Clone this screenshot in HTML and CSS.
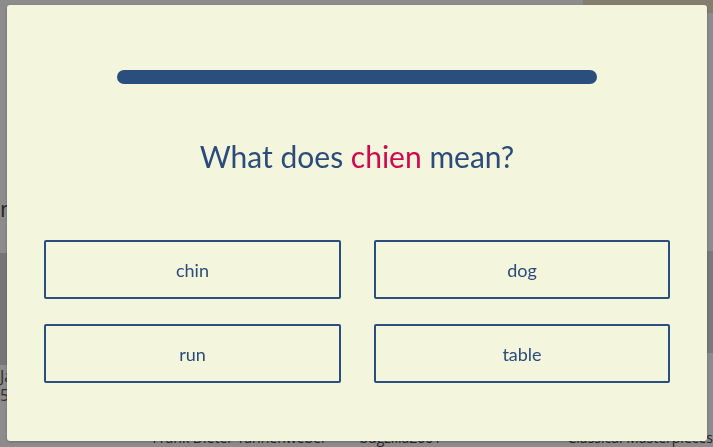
FILE: index.html
```html
<!DOCTYPE html>
<html>
<head>
<meta charset="utf-8">
<link rel="stylesheet" href="styles.css">
</head>
<body>
<div class="page">
  <div class="top-band"><div class="top-img"></div></div>
  <div class="mid">
    <div class="col col-a"><div class="label">n</div><div class="thumb"></div><div class="cap">Ja<br>54</div></div>
    <div class="col col-b"><div class="cap2">Frank Dieter Tannenweber</div></div>
    <div class="col col-c"><div class="cap2">bugzilla2001</div></div>
    <div class="col col-d"><div class="thumb2"></div><div class="cap2">Classical Masterpieces</div></div>
  </div>
</div>
<div class="overlay">
  <div class="modal">
    <div class="progress"></div>
    <h1 class="question">What does <span class="word">chien</span> mean?</h1>
    <div class="choices">
      <button class="choice">chin</button>
      <button class="choice">dog</button>
      <button class="choice">run</button>
      <button class="choice">table</button>
    </div>
  </div>
</div>
</body>
</html>
```
FILE: styles.css
```css
* { box-sizing: border-box; }
html, body { margin: 0; padding: 0; }
body {
  width: 713px;
  height: 447px;
  overflow: hidden;
  background: #fff;
  font-family: Lato, "Open Sans", sans-serif;
}
.page {
  height: 447px;
  display: flex;
  flex-direction: column;
}
.top-band {
  height: 25px;
  display: flex;
  justify-content: flex-end;
}
.top-img {
  width: 130px;
  background: #f0e6c8;
}
.mid {
  flex: 1;
  display: flex;
}
.col { display: flex; flex-direction: column; }
.col-a { width: 157px; }
.col-b { width: 213px; padding-top: 416px; }
.col-c { width: 214px; padding-top: 416px; }
.col-d { flex: 1; padding-top: 238px; }
.label { margin-top: 180px; height: 60px; color: #444; font-size: 22px; line-height: 30px; font-family: "Open Sans", sans-serif; }
.thumb { height: 112px; background: #d8d8d8; }
.cap { color: #555; font-size: 16px; line-height: 19px; margin-top: 2px; font-family: "Open Sans", sans-serif; }
.thumb2 { height: 102px; background: #dcdcdc; margin-bottom: 76px; }
.cap2 { color: #444; font-size: 14px; line-height: 18px; white-space: nowrap; font-family: "Open Sans", sans-serif; }

.overlay {
  position: fixed;
  inset: 0;
  background: rgba(0, 0, 0, 0.45);
  padding: 5px 6px 6px 7px;
}
.modal {
  width: 700px;
  height: 436px;
  background: #f3f5dc;
  border-radius: 3px;
  padding: 65px 37px 0 37px;
  display: flex;
  flex-direction: column;
  align-items: center;
  box-shadow: 0 1px 3px rgba(0,0,0,0.25);
}
.progress {
  width: 480px;
  height: 14px;
  border-radius: 7px;
  background: #2a4f7f;
}
.question {
  margin: 53px 0 0 0;
  font-weight: 400;
  font-size: 30px;
  line-height: 38px;
  color: #2b4c7b;
  letter-spacing: 0;
}
.word { color: #d2084f; }
.choices {
  margin-top: 65px;
  width: 100%;
  display: grid;
  grid-template-columns: 297px 296px;
  column-gap: 33px;
  row-gap: 25px;
}
.choice {
  height: 59px;
  background: transparent;
  border: 2px solid #2a4f7f;
  border-radius: 2px;
  color: #2b4c7b;
  font-family: Lato, "Open Sans", sans-serif;
  font-size: 18px;
  padding: 0;
}
```
